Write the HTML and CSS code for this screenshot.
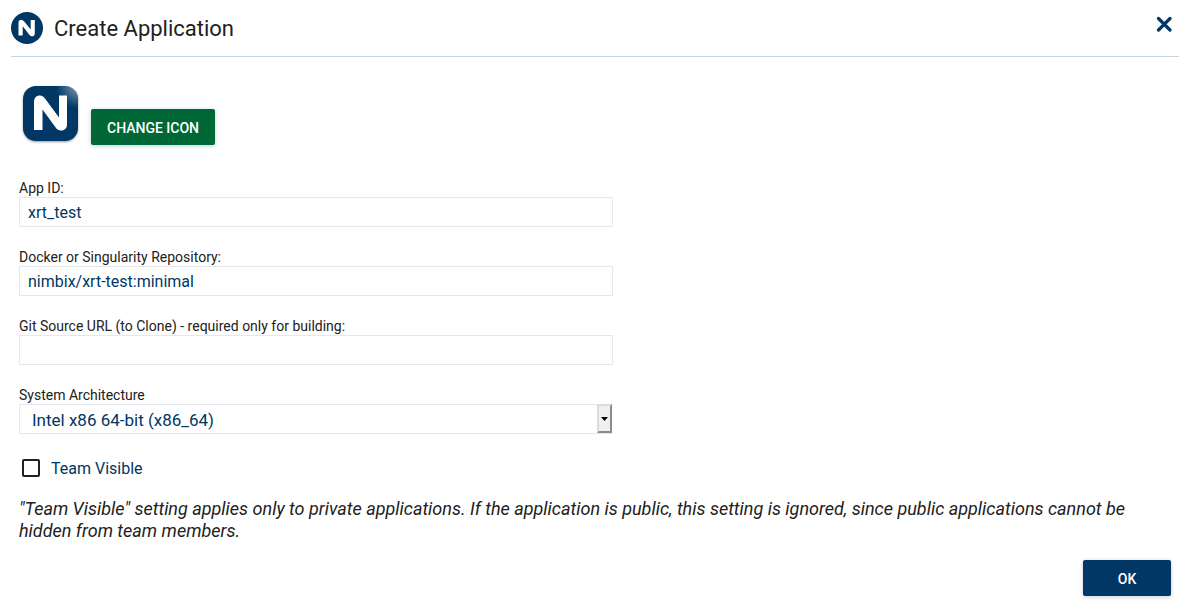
FILE: index.html
```html
<!DOCTYPE html>
<html lang="en">
<head>
<meta charset="utf-8">
<title>Create Application</title>
<link rel="stylesheet" href="styles.css">
</head>
<body>
<main class="dialog">
  <header class="header">
    <svg class="logo" viewBox="0 0 32 32" aria-hidden="true">
      <circle cx="16" cy="16" r="16" fill="#003764"/>
      <path d="M7.500 23.500V10.500C7.500 8.500 8.800 7.700 10 7.700C11.300 7.700 12.300 8.500 12.800 9.100L19.700 17.500V8H23.800V21.500C23.800 23.400 22.700 24.300 21.400 24.300C20 24.300 19 23.600 18.500 23L11.700 14.300V23.500Z" fill="#fff"/>
    </svg>
    <h1 class="title">Create Application</h1>
    <button class="close" type="button" aria-label="Close">
      <svg viewBox="0 0 16 16" aria-hidden="true"><path d="M2.500 2.500L14 14M14 2.500L2.500 14" fill="none" stroke="#003764" stroke-width="3.200" stroke-linecap="round"/></svg>
    </button>
  </header>
  <form class="form">
    <div class="icon-row">
      <svg class="app-icon" viewBox="0 0 64 64" aria-hidden="true">
        <defs>
          <radialGradient id="shine" cx="1" cy="0" r="0.400">
            <stop offset="0" stop-color="#fff" stop-opacity="0.500"/>
            <stop offset="1" stop-color="#fff" stop-opacity="0"/>
          </radialGradient>
        </defs>
        <rect x="4" y="4" width="55" height="55" rx="13" fill="#003764"/>
        <rect x="4" y="4" width="55" height="55" rx="13" fill="url(#shine)"/>
        <path d="M15 48V20C15 15.500 18 13.500 20.500 13.500C23.500 13.500 25 15 26 16.500L40 35.500V13.500H48V42.500C48 46.500 45 48.500 42 48.500C39.500 48.500 38 47.500 37 46L23.500 27.500V48Z" fill="#fff"/>
      </svg>
      <button class="button button-green" type="button">CHANGE ICON</button>
    </div>
    <div class="field">
      <label class="label" for="app-id">App ID:</label>
      <input class="control" id="app-id" type="text" value="xrt_test">
    </div>
    <div class="field">
      <label class="label" for="repo">Docker or Singularity Repository:</label>
      <input class="control" id="repo" type="text" value="nimbix/xrt-test:minimal">
    </div>
    <div class="field">
      <label class="label" for="git">Git Source URL (to Clone) - required only for building:</label>
      <input class="control" id="git" type="text">
    </div>
    <div class="field">
      <label class="label" for="arch">System Architecture</label>
      <div class="select-box">
        <select class="control select" id="arch"><option>Intel x86 64-bit (x86_64)</option></select>
        <span class="arrow"><svg viewBox="0 0 7 4" aria-hidden="true"><path d="M0 0H7L3.500 4Z"/></svg></span>
      </div>
    </div>
    <label class="check-row"><input class="check" type="checkbox"><span class="check-text">Team Visible</span></label>
    <p class="note">"Team Visible" setting applies only to private applications. If the application is public, this setting is ignored, since public applications cannot be hidden from team members.</p>
    <div class="actions"><button class="button button-blue" type="submit">OK</button></div>
  </form>
</main>
</body>
</html>
```
FILE: styles.css
```css
* {
  box-sizing: border-box;
}

body {
  margin: 0;
  background: #fff;
  color: #212121;
  font-family: Roboto, "Liberation Sans", sans-serif;
}

.dialog {
  padding: 0 9px 0 11px;
}

.header {
  display: flex;
  align-items: center;
  height: 57px;
  border-bottom: 1px solid #c8d5e2;
}

.logo {
  width: 32px;
  height: 32px;
}

.title {
  flex: 1;
  margin: 0 0 0 11px;
  padding-top: 2px;
  font-size: 22px;
  font-weight: 400;
  line-height: 28px;
}

.close {
  width: 16px;
  height: 16px;
  margin: 0 7px 8px 0;
  padding: 0;
  border: 0;
  background: none;
}

.close svg {
  display: block;
}

.form {
  padding: 25px 8px 16px;
}

.icon-row {
  display: flex;
  align-items: flex-end;
  gap: 8px;
  margin-bottom: 34px;
}

.app-icon {
  width: 64px;
  height: 64px;
  filter: drop-shadow(0 1px 1px rgba(0, 0, 0, 0.4));
}

.button {
  height: 36px;
  padding: 1px 16px 0;
  border: 0;
  border-radius: 2px;
  color: #fff;
  font: 500 14px/20px Roboto, "Liberation Sans", sans-serif;
  box-shadow: 0 1px 4px rgba(0, 55, 100, 0.25);
}

.button-green {
  margin-bottom: 1px;
  background: #006837;
}

.button-blue {
  width: 88px;
  background: #003764;
}

.field {
  margin-bottom: 22px;
}

.label {
  display: block;
  font-size: 14px;
  line-height: 17px;
}

.control {
  display: block;
  box-sizing: content-box;
  width: 50%;
  height: 26px;
  padding: 2px 8px 0;
  border: 1px solid #e4e8ec;
  border-radius: 0;
  background: #fff;
  color: #003764;
  font: 400 16px/26px Roboto, "Liberation Sans", sans-serif;
}

.select-box {
  display: flex;
}

.select {
  appearance: none;
  padding: 2px 5px 0 12px;
  border-right: 0;
  margin-right: -16px;
  font-size: 17px;
}

.arrow {
  display: flex;
  align-items: center;
  justify-content: center;
  width: 15px;
  margin-bottom: 1px;
  border: 2px solid;
  border-color: #dcdcdc #8c8c8c #8c8c8c #dcdcdc;
  background: #f0f0f0;
  pointer-events: none;
  z-index: 1;
}

.arrow svg {
  width: 7px;
  height: 4px;
}

.check-row {
  display: flex;
  align-items: center;
  gap: 11px;
  width: max-content;
  margin: 24px 0 0 3px;
  color: #003764;
  font-size: 16px;
  line-height: 18px;
}

.check-text {
  padding-top: 2px;
}

.check {
  appearance: none;
  width: 18px;
  height: 18px;
  margin: 0;
  border: 2px solid #212121;
  border-radius: 2px;
}

.note {
  margin: 20px 0 18px;
  font-size: 18px;
  font-style: italic;
  line-height: 22px;
}

.actions {
  display: flex;
  justify-content: flex-end;
}
```
